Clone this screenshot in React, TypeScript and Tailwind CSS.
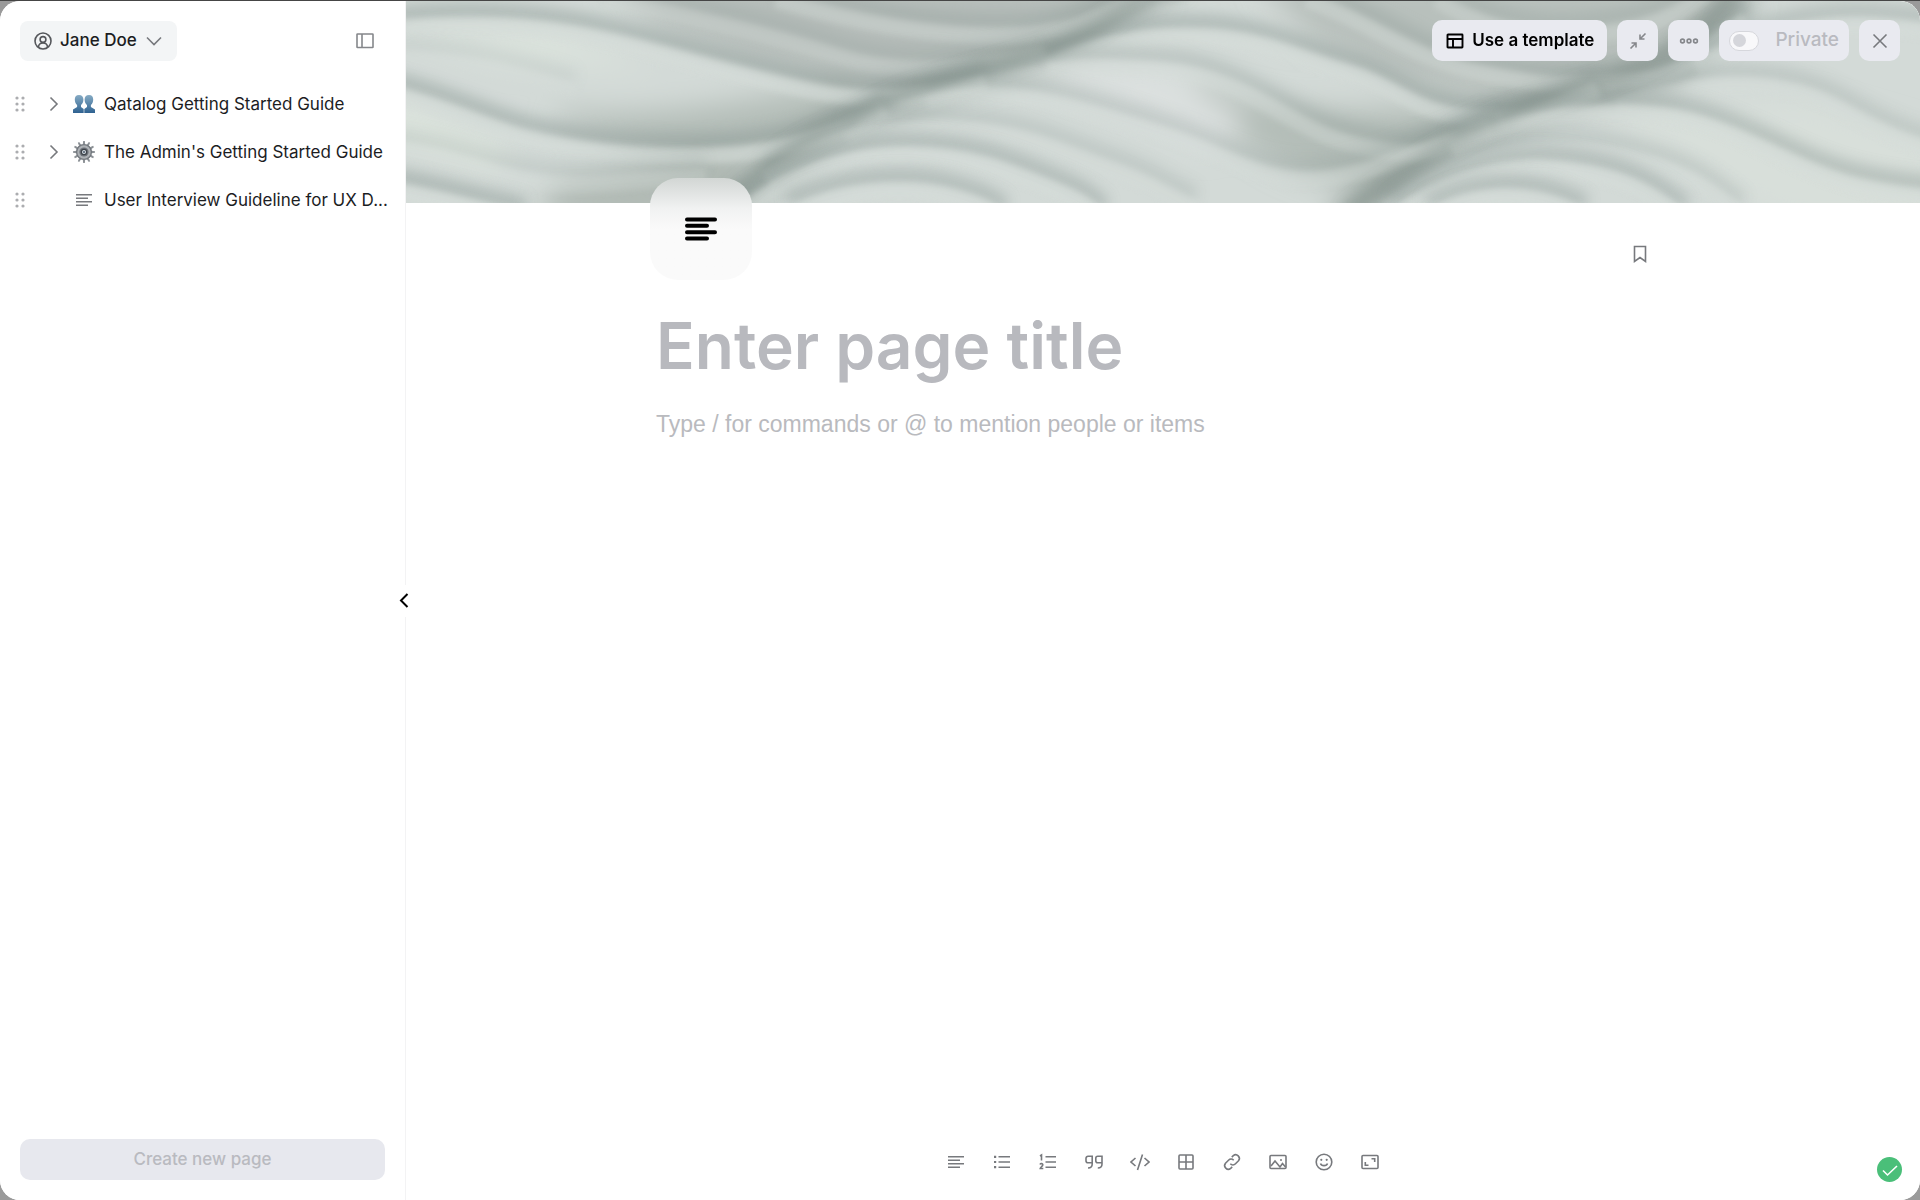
import type { ReactNode } from 'react';

interface IconProps {
  className?: string;
  children: ReactNode;
  size?: number;
  strokeWidth?: number;
}

const Icon = ({ className = '', children, size = 20, strokeWidth = 1.6 }: IconProps) => (
  <svg
    width={size}
    height={size}
    viewBox="0 0 20 20"
    fill="none"
    stroke="currentColor"
    strokeWidth={strokeWidth}
    className={`shrink-0 ${className}`}
    aria-hidden="true"
  >
    {children}
  </svg>
);

const PeopleEmoji = () => (
  <svg width="22" height="20" viewBox="0 0 22 20" aria-hidden="true">
    <defs>
      <linearGradient id="people" x1="0" y1="0" x2="0" y2="1">
        <stop offset="0" stopColor="#86abc4" />
        <stop offset="1" stopColor="#2f6291" />
      </linearGradient>
    </defs>
    <g fill="url(#people)">
      <path d="M6 1c-3 0-4.300 2-4.200 4.600 0 2.400.9 4.200 2.300 5.400v2L0 15.500V19h10.700v-4L8 13v-2c1.500-1.200 2.400-3 2.400-5.400C10.400 3 9 1 6 1z" />
      <path d="M16 1c3 0 4.300 2 4.200 4.600 0 2.400-.9 4.200-2.300 5.400v2l4.100 2.500V19H11.300v-4L14 13v-2c-1.500-1.200-2.400-3-2.400-5.400C11.600 3 13 1 16 1z" />
    </g>
  </svg>
);

const TEETH = [0, 30, 60, 90, 120, 150, 180, 210, 240, 270, 300, 330];

const GearEmoji = () => (
  <svg width="22" height="22" viewBox="0 0 22 22" aria-hidden="true">
    <g fill="#8b9095">
      {TEETH.map((deg) => (
        <path key={deg} d="M9.800 3.500 10.200 0h1.600l.4 3.500z" transform={`rotate(${deg} 11 11)`} />
      ))}
    </g>
    <circle cx="11" cy="11" r="7.400" fill="#aeb2b6" stroke="#73787e" strokeWidth="1.400" />
    <circle cx="11" cy="11" r="4.600" fill="#6c7178" />
    <circle cx="11" cy="11" r="2.600" fill="#d8e0e7" stroke="#3d434a" strokeWidth="1.200" />
    <circle cx="11" cy="11" r="1" fill="#4a5a6a" />
  </svg>
);

const LinesIcon = () => (
  <Icon>
    <path d="M2 4.800h16M2 8.300h12M2 11.800h16M2 15.300h12" />
  </Icon>
);

interface PageItem {
  title: string;
  icon: ReactNode;
  expandable: boolean;
}

const PAGES: PageItem[] = [
  { title: 'Qatalog Getting Started Guide', icon: <PeopleEmoji />, expandable: true },
  { title: "The Admin's Getting Started Guide", icon: <GearEmoji />, expandable: true },
  { title: 'User Interview Guideline for UX D...', icon: <LinesIcon />, expandable: false },
];

const TOOLS: { label: string; icon: ReactNode }[] = [
  { label: 'Text', icon: <LinesIcon /> },
  {
    label: 'Bulleted list',
    icon: (
      <Icon>
        <path d="M6.500 4.800H18M6.500 10H18M6.500 15.200H18" />
        <path d="M2 4.800h2.200M2 10h2.200M2 15.200h2.200" strokeWidth="2.200" />
      </Icon>
    ),
  },
  {
    label: 'Numbered list',
    icon: (
      <Icon>
        <path d="M7.500 4.800H18M7.500 10H18M7.500 15.200H18" />
        <path d="M2 4l1.500-1v5.500M2 12.500c.5-1.200 3-1.200 2.800.4C4.600 14.500 2.400 15 2.200 16.500H5.300" />
      </Icon>
    ),
  },
  {
    label: 'Quote',
    icon: (
      <Icon>
        <path d="M8.200 10.800H4a2 2 0 0 1-2-2V6.300a2 2 0 0 1 2-2h4.200v7.700c0 2.500-1.400 4-4.200 4M18 10.800h-4.200a2 2 0 0 1-2-2V6.300a2 2 0 0 1 2-2H18v7.700c0 2.500-1.400 4-4.200 4" />
      </Icon>
    ),
  },
  {
    label: 'Code',
    icon: (
      <Icon>
        <path d="M5.500 6 1 10l4.500 4M14.500 6l4.500 4-4.500 4M12.500 2.500l-5 15.500" />
      </Icon>
    ),
  },
  {
    label: 'Table',
    icon: (
      <Icon>
        <rect x="3" y="3" width="14" height="14" rx="1" />
        <path d="M10 3v14M3 10h14" />
      </Icon>
    ),
  },
  {
    label: 'Link',
    icon: (
      <Icon>
        <path d="M8.300 11.800a3.700 3.700 0 0 0 5.200 0l3-3a3.700 3.700 0 0 0-5.200-5.200L9.800 5.100M11.700 8.200a3.700 3.700 0 0 0-5.200 0l-3 3a3.700 3.700 0 0 0 5.200 5.200l1.500-1.500" />
      </Icon>
    ),
  },
  {
    label: 'Image',
    icon: (
      <Icon>
        <rect x="2" y="3.500" width="16" height="13" rx="1" />
        <path d="M3 14l4-5 5 6 2.500-3.500L17.500 15" />
        <circle cx="13" cy="8" r="1" fill="currentColor" stroke="none" />
      </Icon>
    ),
  },
  {
    label: 'Emoji',
    icon: (
      <Icon>
        <circle cx="10" cy="10" r="7.800" />
        <path d="M6.500 11.500c1 2.800 6 2.800 7 0" />
        <circle cx="7.300" cy="7.800" r="1.100" fill="currentColor" stroke="none" />
        <circle cx="12.700" cy="7.800" r="1.100" fill="currentColor" stroke="none" />
      </Icon>
    ),
  },
  {
    label: 'Embed',
    icon: (
      <Icon>
        <rect x="2" y="3.500" width="16" height="13" rx="1" />
        <path d="M11.500 6.800h3.200V10M5.300 10v3.200h3.200" />
      </Icon>
    ),
  },
];

// Fold edges of the cover fabric, each one with its shade strength
const FOLDS: [string, number][] = [
  ['M370 -10C440 10 520 26 590 26S680 14 740 -16', 0.5],
  ['M200 -10C300 10 380 30 430 46S540 66 640 44', 0.4],
  ['M-40 22C60 10 130 16 190 28S330 66 400 80S490 90 580 72', 0.8],
  ['M-40 48C60 48 110 64 170 82', 0.2],
  ['M-40 78C30 92 80 118 120 128S220 148 290 146S390 140 480 100', 0.8],
  ['M-40 136C40 142 80 165 130 172S220 172 300 166', 0.3],
  ['M-40 176C30 186 70 200 120 210', 0.8],
  ['M1030 -10C1070 14 1120 30 1170 26S1260 16 1300 -16', 0.45],
  ['M900 -10C960 10 1010 50 1069 62S1142 78 1215 72S1280 50 1340 10', 0.55],
  ['M640 56C690 34 740 24 800 27S890 48 940 62S1010 106 1070 108S1120 106 1192 80', 0.75],
  ['M520 92C570 74 640 56 700 58S790 60 840 84S910 130 972 140S1030 136 1100 110', 0.5],
  ['M440 130C480 100 520 88 576 86S690 104 754 124S850 170 900 170S990 150 1085 116', 0.45],
  ['M360 170C410 130 480 116 550 120S650 140 700 158S750 180 790 200', 0.4],
  ['M333 204C380 166 440 144 503 145S600 160 648 180S680 200 700 210', 0.7],
  ['M382 206C440 176 510 176 550 188S580 200 600 210', 0.7],
  ['M1290 58C1350 24 1420 12 1470 16S1510 20 1540 24', 0.6],
  ['M1210 96C1280 74 1340 70 1390 82S1460 124 1540 144', 0.45],
  ['M1045 140C1100 112 1160 102 1215 103S1300 112 1360 140S1440 180 1540 190', 0.7],
  ['M980 200C1060 140 1150 132 1215 147S1300 176 1336 206', 0.4],
  ['M985 208C1050 164 1110 154 1160 160S1240 178 1280 210', 0.7],
  ['M1021 208C1070 180 1130 180 1180 208', 0.7],
];

const Cover = () => (
  <svg
    viewBox="0 0 1514 202"
    preserveAspectRatio="xMidYMid slice"
    className="block w-full h-full"
    aria-hidden="true"
  >
    <defs>
      <filter id="wide" filterUnits="userSpaceOnUse" x="-80" y="-80" width="1680" height="370">
        <feGaussianBlur stdDeviation="14" />
      </filter>
      <filter id="shade" filterUnits="userSpaceOnUse" x="-80" y="-80" width="1680" height="370">
        <feGaussianBlur stdDeviation="7" />
      </filter>
      <filter id="light" filterUnits="userSpaceOnUse" x="-80" y="-80" width="1680" height="370">
        <feGaussianBlur stdDeviation="3" />
      </filter>
    </defs>
    <rect width="1514" height="202" fill="#d3dad7" />

    {/* Broad shading */}
    <g filter="url(#wide)">
      <path d="M190 -20H740L640 55 500 95 360 65 260 30z" fill="#b6bdba" />
      <path d="M150 110C260 120 380 90 460 80L400 150C330 180 220 150 150 120z" fill="#b4bdb8" />
      <path d="M150 185L340 150 330 222H130z" fill="#b0b9b4" />
      <path d="M850 -20H1330L1280 60 1140 106 1000 85 910 40z" fill="#b8c0bc" />
      <path d="M790 80C900 120 980 110 1060 100L980 190C880 180 850 150 790 100z" fill="#b4bdb8" />
      <path d="M-20 100L110 150 80 165 -20 135z" fill="#dfe7df" />
      <path d="M-20 25L150 30 250 70 100 60z" fill="#dbe3dd" />
      <path d="M620 70L754 66 840 120 800 150 700 105z" fill="#dbe0df" />
      <path d="M1190 115L1400 100 1534 140V222H1380z" fill="#d8dfda" />
      <path d="M300 222L440 120 540 82 640 50 750 -10" fill="none" stroke="#8f9c97" strokeWidth="20" />
      <path d="M930 222L1045 136 1142 100 1260 74 1340 -6" fill="none" stroke="#8a9792" strokeWidth="22" />
    </g>

    {/* Every fold: a wide shadow above its edge, then the lit cloth below */}
    {FOLDS.map(([d, shade]) => (
      <g key={d} fill="none" opacity={shade}>
        <path d={d} transform="translate(0 -5)" stroke="#8a9894" strokeWidth="18" opacity="0.6" filter="url(#shade)" />
        <path d={d} transform="translate(0 9)" stroke="#d8dfdb" strokeWidth="16" opacity="0.75" filter="url(#light)" />
      </g>
    ))}

    {/* Deep creases */}
    <g filter="url(#shade)" fill="none" stroke="#7d8c86">
      <path d="M320 200C370 150 420 128 480 100S640 60 700 20S750 0 780 -10" strokeWidth="12" opacity="0.5" />
      <path d="M940 212C1010 160 1080 118 1142 98S1270 60 1330 -10" strokeWidth="12" opacity="0.5" />
    </g>
  </svg>
);

const Sidebar = () => (
  <aside className="relative w-[406px] shrink-0 flex flex-col border-r border-[#f3f3f4] bg-white">
    {/* Account */}
    <div className="flex items-center justify-between pl-5 pr-[30px] pt-5">
      <button className="h-10 flex items-center gap-[7px] px-[13px] rounded-lg bg-[#f3f5f6] text-[17px] font-medium text-[#1c1d1f]">
        <Icon className="text-[#55575b]">
          <circle cx="10" cy="10" r="8" />
          <circle cx="10" cy="8.500" r="2.900" />
          <path d="M5.500 16c.2-3 1.800-4 4.500-4s4.300 1 4.500 4" />
        </Icon>
        Jane Doe
        <Icon className="text-[#77797d]">
          <path d="M3 6.500l7 7 7-7" />
        </Icon>
      </button>
      <button aria-label="Toggle sidebar" className="text-[#85878b]">
        <Icon>
          <rect x="2" y="3" width="16" height="13.500" rx="0.500" />
          <path d="M7 3V16.500" />
        </Icon>
      </button>
    </div>

    {/* Page tree */}
    <ul className="flex-1 mt-[19px]">
      {PAGES.map((page) => (
        <li key={page.title} className="h-12 flex items-center pl-[10px]">
          <Icon className="text-[#acadb0]">
            {[4, 10, 16].map((y) => (
              <g key={y} fill="currentColor" stroke="none">
                <circle cx="7" cy={y} r="1.600" />
                <circle cx="13" cy={y} r="1.600" />
              </g>
            ))}
          </Icon>
          <div className="w-[43px] shrink-0 flex justify-center pl-1">
            {page.expandable && (
              <button aria-label={`Expand ${page.title}`} className="text-[#77797d]">
                <Icon>
                  <path d="M6.500 3.500l6.500 6.500-6.500 6.500" />
                </Icon>
              </button>
            )}
          </div>
          <a href="#" className="flex items-center gap-[9px] text-[#1c1d1f] text-[17px] leading-6 whitespace-nowrap">
            <span className="w-[22px] shrink-0 flex justify-center text-[#77797d]">{page.icon}</span>
            {page.title}
          </a>
        </li>
      ))}
    </ul>

    <div className="px-5 pb-5">
      <button
        disabled
        className="w-full h-[41px] rounded-[10px] bg-[#e7e8ee] text-[17px] font-medium text-[#b9bac0]"
      >
        Create new page
      </button>
    </div>

    {/* Collapse handle over the divider */}
    <button
      aria-label="Collapse sidebar"
      className="absolute -right-[10px] top-1/2 -translate-y-1/2 z-10 h-8 w-5 flex items-center justify-center bg-white text-black"
    >
      <Icon strokeWidth={2}>
        <path d="M12.500 3L6 9.500l6.500 6.500" />
      </Icon>
    </button>
  </aside>
);

const TopActions = () => (
  <div className="absolute right-5 top-[19px] flex items-center gap-[10px]">
    <button className="h-[41px] flex items-center gap-[7px] px-[13px] rounded-[10px] bg-[#e9eaf0] text-[17px] font-semibold text-black">
      <Icon>
        <rect x="2.500" y="3.500" width="15" height="13" rx="0.500" strokeWidth="1.900" />
        <path d="M2.500 8h15M8 8v8.500" strokeWidth="1.900" />
      </Icon>
      Use a template
    </button>
    <button aria-label="Shrink" className="size-[41px] flex items-center justify-center rounded-[10px] bg-[#e9eaf0] text-[#85878b]">
      <Icon>
        <path d="M17.500 2.500l-5 5M12 3.500V8h4.500M2.500 17.500l5-5M8 16.500V12H3.500" />
      </Icon>
    </button>
    <button aria-label="More" className="size-[41px] flex items-center justify-center rounded-[10px] bg-[#e9eaf0] text-[#85878b]">
      <Icon>
        <circle cx="3.500" cy="10" r="1.900" />
        <circle cx="10" cy="10" r="1.900" />
        <circle cx="16.500" cy="10" r="1.900" />
      </Icon>
    </button>
    <label className="h-[41px] flex items-center gap-4 px-[10px] rounded-[10px] bg-[#e9eaf0] text-[19px] font-medium text-[#b9bac0]">
      <input
        type="checkbox"
        disabled
        className="appearance-none w-[30px] h-5 rounded-full border border-[#d6d7dc] bg-[#f8f8fa] flex items-center px-[3px] before:content-[''] before:size-[13px] before:rounded-full before:bg-[#d5d6db]"
      />
      Private
    </label>
    <button aria-label="Close" className="size-[41px] flex items-center justify-center rounded-[10px] bg-[#e9eaf0] text-[#77797d]">
      <Icon>
        <path d="M3.500 3.500l13 13M16.500 3.500l-13 13" />
      </Icon>
    </button>
  </div>
);

const Editor = () => (
  <main className="relative flex-1 min-w-0 flex flex-col bg-white">
    <div className="h-[202px] overflow-hidden">
      <Cover />
    </div>
    <TopActions />

    <div className="w-full max-w-[1026px] mx-auto flex-1 flex flex-col">
      <div className="flex items-start justify-between">
        <button
          aria-label="Page icon"
          className="relative -mt-[25px] size-[102px] rounded-[28px] flex items-center justify-center bg-linear-to-b from-[#d2d6d4] from-0% via-[#f1f2f2] via-30% to-[#fafafa] to-50% text-black"
        >
          <svg width="32" height="24" viewBox="0 0 32 24" stroke="currentColor" strokeWidth="4" strokeLinecap="round" aria-hidden="true">
            <path d="M2 2.500h28M2 8.800h20M2 15.200h28M2 21.500h20" />
          </svg>
        </button>
        <button aria-label="Bookmark" className="mt-[41px] mr-[26px] text-[#77797d]">
          <Icon>
            <path d="M4.500 2.500h11v15L10 13.500l-5.500 4z" />
          </Icon>
        </button>
      </div>
      <input
        type="text"
        aria-label="Page title"
        placeholder="Enter page title"
        className="mt-[26px] px-[6px] h-20 w-full bg-transparent outline-none text-[64px] font-semibold text-black placeholder:text-[#b8b9be]"
      />
      <textarea
        aria-label="Page content"
        placeholder="Type / for commands or @ to mention people or items"
        className="mt-[22px] px-[6px] w-full flex-1 resize-none bg-transparent outline-none font-['Liberation_Sans',sans-serif] text-[23px] leading-8 text-black placeholder:text-[#b9babe]"
      />
    </div>

    {/* Block toolbar */}
    <div className="flex justify-center gap-[26px] pb-7 text-[#77797d]">
      {TOOLS.map((tool) => (
        <button key={tool.label} aria-label={tool.label}>
          {tool.icon}
        </button>
      ))}
    </div>

    {/* Saved status */}
    <div className="absolute right-[18px] bottom-[18px] size-[25px] rounded-full bg-[#4abf79] text-white flex items-center justify-center">
      <Icon>
        <path d="M3 10.500l4.500 4.500L17 6" />
      </Icon>
    </div>
  </main>
);

export default function App() {
  return (
    <div className="h-screen flex border-t border-[#454545] bg-[#9a9a9a] font-['Inter','Liberation_Sans',sans-serif]">
      <div className="flex-1 flex rounded-[20px] overflow-hidden bg-white">
        <Sidebar />
        <Editor />
      </div>
    </div>
  );
}
